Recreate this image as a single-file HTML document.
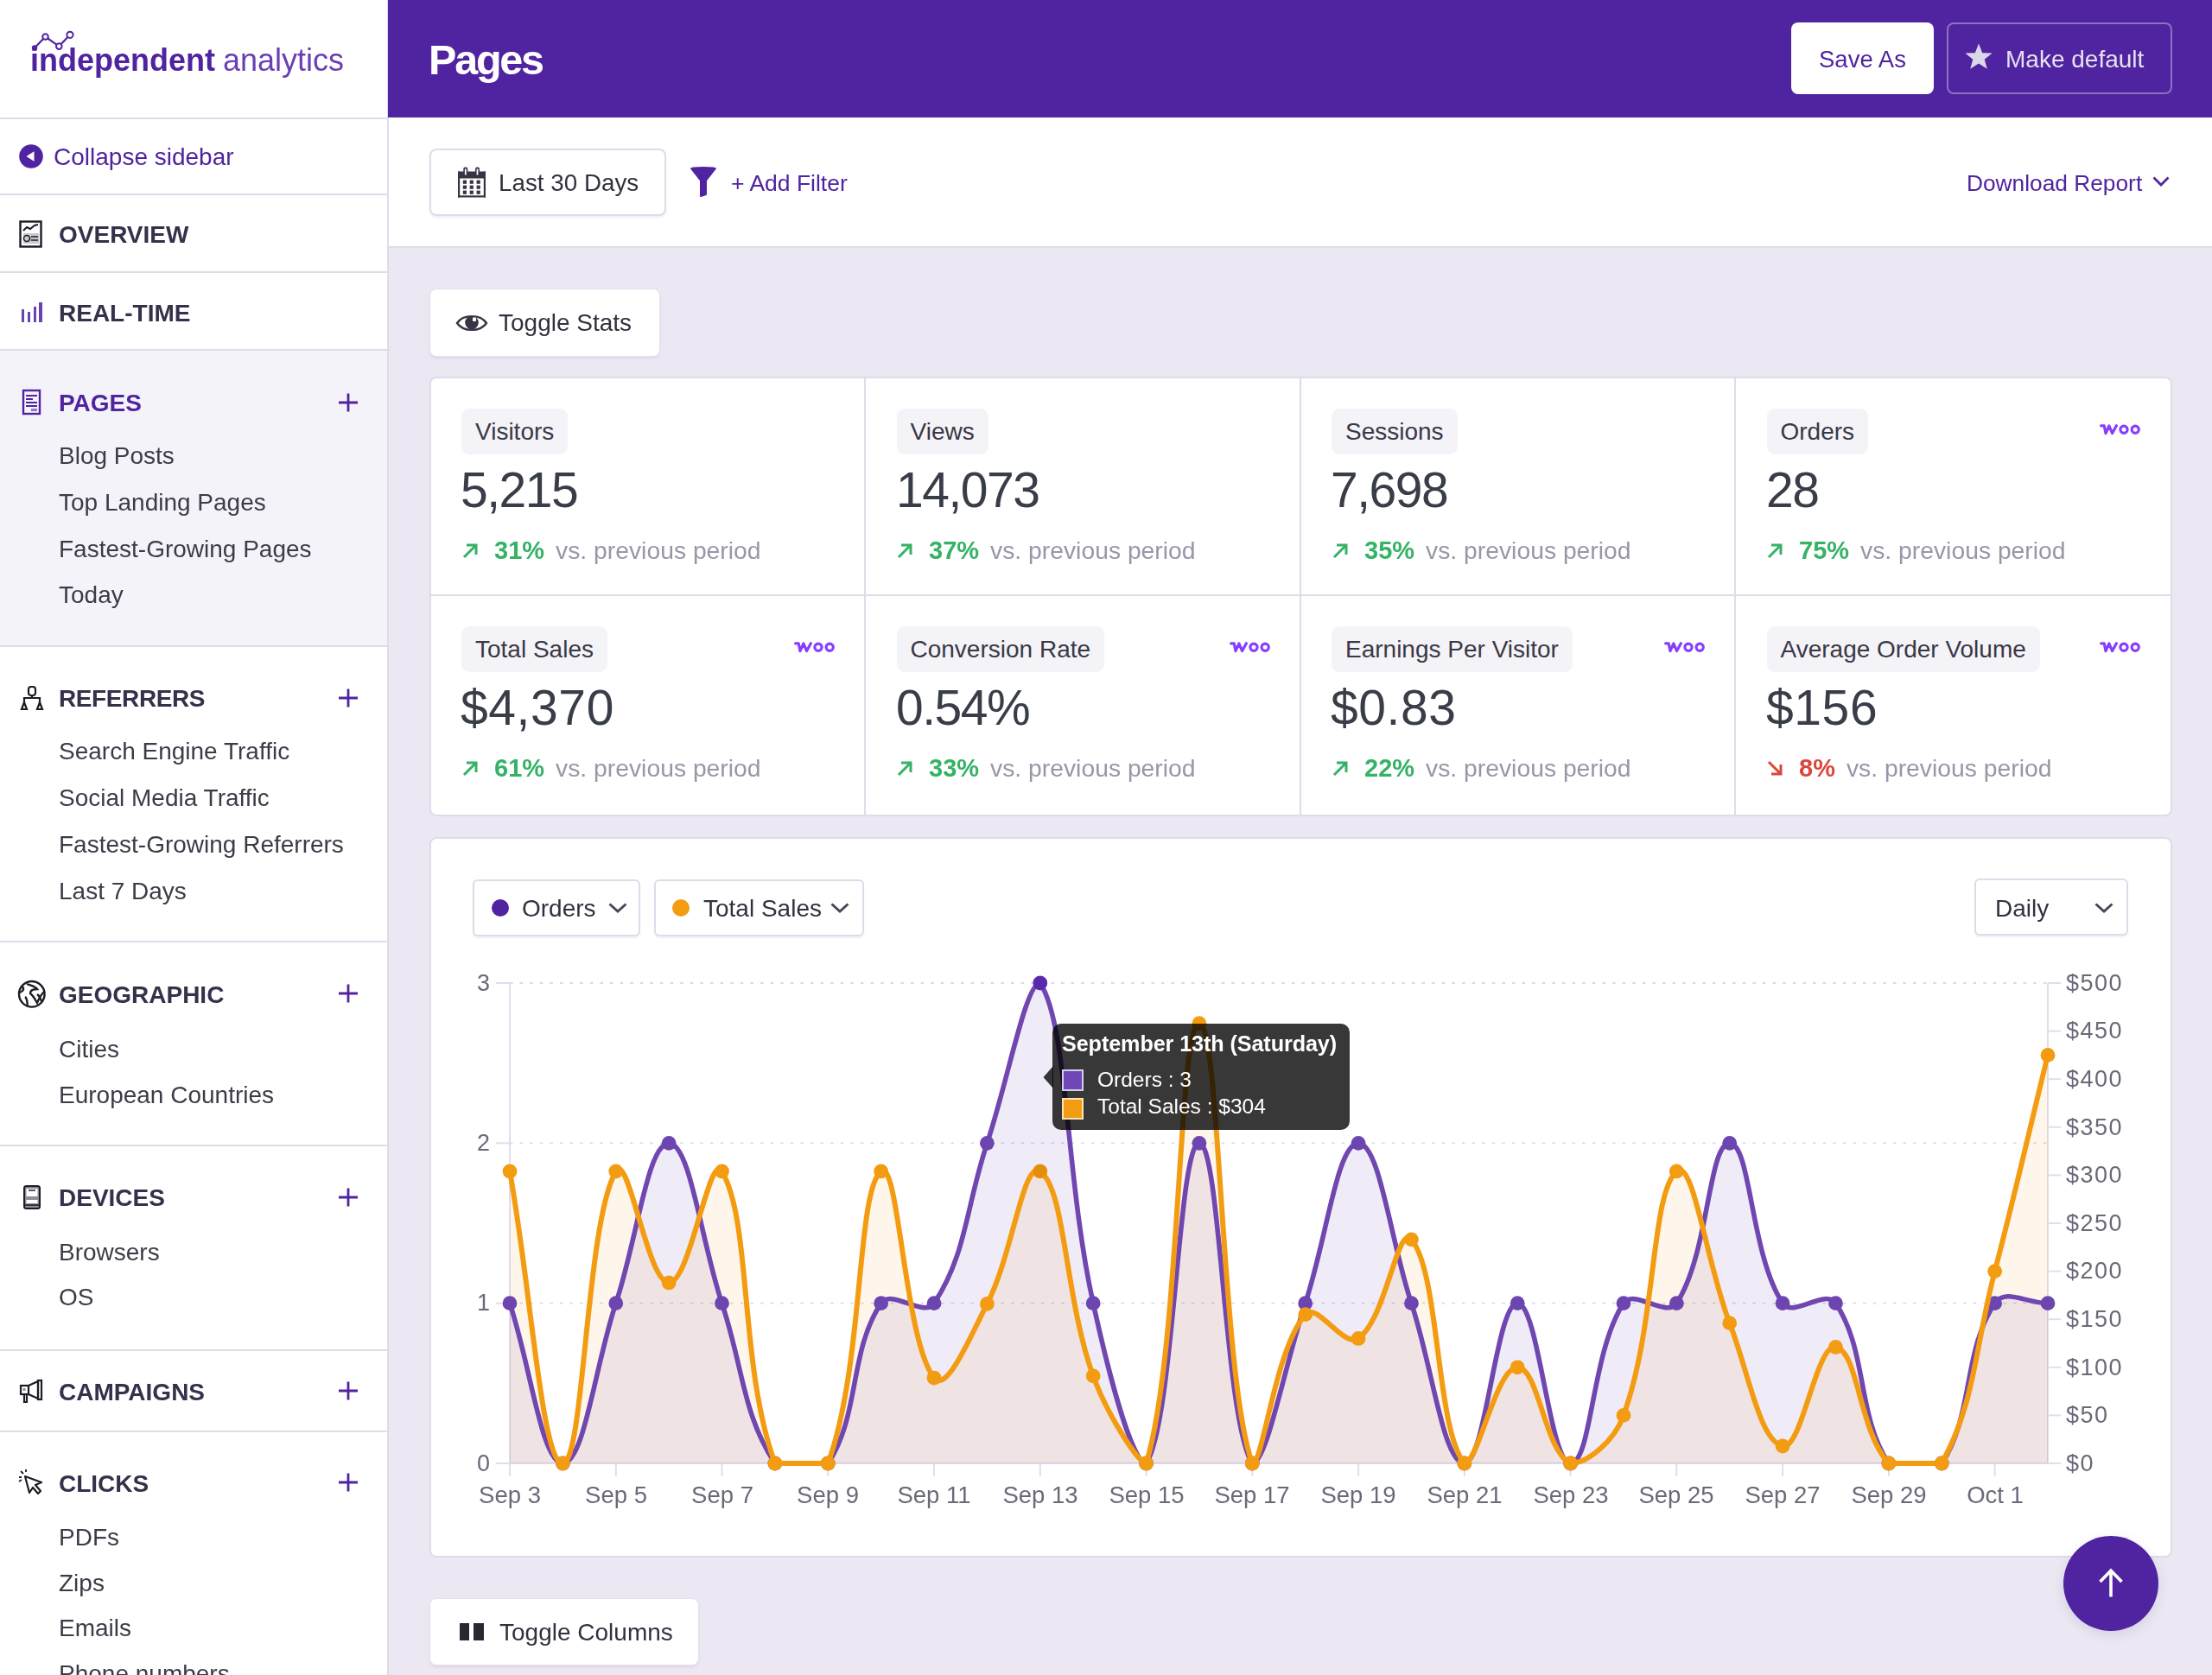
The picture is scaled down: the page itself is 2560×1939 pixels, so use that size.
<!DOCTYPE html>
<html><head><meta charset="utf-8"><title>Pages</title>
<style>
html,body{margin:0;padding:0;}
body{width:2560px;height:1939px;overflow:hidden;position:relative;background:#ebe8f3;font-family:"Liberation Sans",sans-serif;}
.t{position:absolute;white-space:nowrap;line-height:1;will-change:transform;}
.b{position:absolute;}
.pill{position:absolute;height:53px;line-height:53px;padding:0 16px;background:#f4f3f8;border-radius:9px;font-size:28px;color:#3a3845;white-space:nowrap;}
.vs{color:#9a96a8;}
.ax{color:#6b6878;}
</style></head><body>
<div class="b" style="left:0px;top:0px;width:448px;height:1939px;background:#fff"></div><div class="b" style="left:448px;top:0px;width:2px;height:1939px;background:#dfdbe9"></div><svg class="b" style="left:30px;top:30px" width="60" height="40" viewBox="0 0 60 40"><g stroke="#5024a0" stroke-width="2.2" fill="none"><polyline points="10,25.5 22.5,12.5 38.3,23.6 51,10.3"/></g><circle cx="10" cy="25.5" r="3.2" fill="#5024a0"/><circle cx="22.5" cy="12.5" r="3.3" fill="#fff" stroke="#5024a0" stroke-width="2"/><circle cx="38.3" cy="23.6" r="3.3" fill="#fff" stroke="#5024a0" stroke-width="2"/><circle cx="51" cy="10.3" r="3.6" fill="#fff" stroke="#5024a0" stroke-width="2"/></svg><div class="t" style="left:35.0px;top:52.0px;font-size:36px;font-weight:700;color:#5024a0;letter-spacing:0px;">independent</div><div class="t" style="left:258.0px;top:52.0px;font-size:36px;font-weight:400;color:#6a3fb5;letter-spacing:0px;">analytics</div><div class="b" style="left:0px;top:136px;width:448px;height:2px;background:#dfdbe9"></div><svg class="b" style="left:22px;top:167px" width="28" height="28" viewBox="0 0 28 28"><circle cx="14" cy="14" r="13.8" fill="#5024a0"/><path d="M8.5 14 L17.5 8.2 L17.5 19.8 Z" fill="#fff"/></svg><div class="t" style="left:62.0px;top:168.0px;font-size:28px;font-weight:400;color:#5024a0;letter-spacing:0px;">Collapse sidebar</div><div class="b" style="left:0px;top:224px;width:448px;height:2px;background:#dfdbe9"></div><svg class="b" style="left:22px;top:255px" width="28" height="33" viewBox="0 0 28 33"><rect x="1.5" y="1.5" width="24" height="29" fill="none" stroke="#1e1b26" stroke-width="2.4"/><polyline points="5,12 9,8 13,10 18,6 22,5" fill="none" stroke="#1e1b26" stroke-width="2"/><rect x="5" y="15" width="18" height="12" fill="#c9c7cf"/><circle cx="9" cy="21" r="3.5" fill="none" stroke="#1e1b26" stroke-width="1.6"/><path d="M14 19 H22 M14 23 H22" stroke="#1e1b26" stroke-width="1.4"/></svg><div class="t" style="left:68.0px;top:258.0px;font-size:28px;font-weight:700;color:#35314a;letter-spacing:0px;">OVERVIEW</div><div class="b" style="left:0px;top:314px;width:448px;height:2px;background:#dfdbe9"></div><svg class="b" style="left:24px;top:349px" width="26" height="25" viewBox="0 0 26 25"><g fill="#5024a0" opacity="0.85"><rect x="1" y="9" width="3" height="15"/><rect x="8" y="12" width="3" height="12"/><rect x="15" y="6" width="3" height="18"/><rect x="21" y="1" width="4" height="23"/></g></svg><div class="t" style="left:68.0px;top:349.0px;font-size:28px;font-weight:700;color:#35314a;letter-spacing:0px;">REAL-TIME</div><div class="b" style="left:0px;top:404px;width:448px;height:2px;background:#dfdbe9"></div><div class="b" style="left:0px;top:406px;width:448px;height:341px;background:#f5f3fa"></div><svg class="b" style="left:25px;top:450px" width="24" height="31" viewBox="0 0 24 31"><rect x="2" y="2" width="19" height="27" fill="none" stroke="#5024a0" stroke-width="2.4"/><path d="M5 8 H18 M5 12 H13 M5 16 H18 M5 20 H18" stroke="#5024a0" stroke-width="1.8"/><rect x="11" y="23" width="7" height="3" fill="#5024a0" opacity="0.6"/></svg><div class="t" style="left:68.0px;top:453.0px;font-size:28px;font-weight:700;color:#5024a0;letter-spacing:0px;">PAGES</div><svg class="b" style="left:390px;top:454px" width="26" height="24" viewBox="0 0 26 24"><path d="M13 1.5 V22.5 M2 12 H24" stroke="#5024a0" stroke-width="2.8"/></svg><div class="t" style="left:68.0px;top:514.0px;font-size:28px;font-weight:400;color:#3d3b48;letter-spacing:0px;">Blog Posts</div><div class="t" style="left:68.0px;top:568.0px;font-size:28px;font-weight:400;color:#3d3b48;letter-spacing:0px;">Top Landing Pages</div><div class="t" style="left:68.0px;top:622.0px;font-size:28px;font-weight:400;color:#3d3b48;letter-spacing:0px;">Fastest-Growing Pages</div><div class="t" style="left:68.0px;top:675.0px;font-size:28px;font-weight:400;color:#3d3b48;letter-spacing:0px;">Today</div><div class="b" style="left:0px;top:747px;width:448px;height:2px;background:#dfdbe9"></div><svg class="b" style="left:21px;top:792px" width="32" height="32" viewBox="0 0 32 32"><g fill="none" stroke="#1e1b26" stroke-width="2.2"><rect x="12" y="3" width="8" height="10" rx="3"/><path d="M16 13 V16 M7 21 V16 H25 V21"/><path d="M4 29 L7 21 L10 29 Z M22 29 L25 21 L28 29 Z"/></g></svg><div class="t" style="left:68.0px;top:795.0px;font-size:28px;font-weight:700;color:#35314a;letter-spacing:-0.4px;">REFERRERS</div><svg class="b" style="left:390px;top:796px" width="26" height="24" viewBox="0 0 26 24"><path d="M13 1.5 V22.5 M2 12 H24" stroke="#5024a0" stroke-width="2.8"/></svg><div class="t" style="left:68.0px;top:856.0px;font-size:28px;font-weight:400;color:#3d3b48;letter-spacing:0px;">Search Engine Traffic</div><div class="t" style="left:68.0px;top:910.0px;font-size:28px;font-weight:400;color:#3d3b48;letter-spacing:0px;">Social Media Traffic</div><div class="t" style="left:68.0px;top:964.0px;font-size:28px;font-weight:400;color:#3d3b48;letter-spacing:0px;">Fastest-Growing Referrers</div><div class="t" style="left:68.0px;top:1018.0px;font-size:28px;font-weight:400;color:#3d3b48;letter-spacing:0px;">Last 7 Days</div><div class="b" style="left:0px;top:1089px;width:448px;height:2px;background:#dfdbe9"></div><svg class="b" style="left:20px;top:1134px" width="34" height="34" viewBox="0 0 34 34"><g fill="none" stroke="#1e1b26" stroke-width="2.4"><circle cx="16.8" cy="16.8" r="14.8"/><path d="M6 8 C9 12 5 14 3 15 M9 20 C12 22 11 27 12 30 M11 5 C16 7 20 7 23 11 C19 11 15 12 15 16 C19 19 21 24 23 27 C25 22 27 18 31 14 M23 17 C26 19 27 22 28 25"/></g></svg><div class="t" style="left:68.0px;top:1138.0px;font-size:28px;font-weight:700;color:#35314a;letter-spacing:0px;">GEOGRAPHIC</div><svg class="b" style="left:390px;top:1138px" width="26" height="24" viewBox="0 0 26 24"><path d="M13 1.5 V22.5 M2 12 H24" stroke="#5024a0" stroke-width="2.8"/></svg><div class="t" style="left:68.0px;top:1201.0px;font-size:28px;font-weight:400;color:#3d3b48;letter-spacing:0px;">Cities</div><div class="t" style="left:68.0px;top:1254.0px;font-size:28px;font-weight:400;color:#3d3b48;letter-spacing:0px;">European Countries</div><div class="b" style="left:0px;top:1325px;width:448px;height:2px;background:#dfdbe9"></div><svg class="b" style="left:26px;top:1371px" width="22" height="30" viewBox="0 0 22 30"><rect x="2" y="2" width="18" height="26" rx="2.5" fill="#8e8b94" stroke="#1e1b26" stroke-width="2"/><rect x="4.5" y="5" width="13" height="9" fill="#fff"/><rect x="4.5" y="18" width="13" height="4" fill="#fff"/><path d="M7 7 H15 M3 24 H19" stroke="#1e1b26" stroke-width="1.6"/></svg><div class="t" style="left:68.0px;top:1373.0px;font-size:28px;font-weight:700;color:#35314a;letter-spacing:0px;">DEVICES</div><svg class="b" style="left:390px;top:1374px" width="26" height="24" viewBox="0 0 26 24"><path d="M13 1.5 V22.5 M2 12 H24" stroke="#5024a0" stroke-width="2.8"/></svg><div class="t" style="left:68.0px;top:1436.0px;font-size:28px;font-weight:400;color:#3d3b48;letter-spacing:0px;">Browsers</div><div class="t" style="left:68.0px;top:1488.0px;font-size:28px;font-weight:400;color:#3d3b48;letter-spacing:0px;">OS</div><div class="b" style="left:0px;top:1562px;width:448px;height:2px;background:#dfdbe9"></div><svg class="b" style="left:21px;top:1595px" width="32" height="32" viewBox="0 0 32 32"><g fill="none" stroke="#1e1b26" stroke-width="2.2"><rect x="3" y="9" width="9" height="10"/><path d="M12 9 L23 4 V24 L12 19"/><rect x="23" y="3" width="4" height="22"/><path d="M7 19 V28 H10 V19"/></g><rect x="5.5" y="12" width="3" height="3" fill="#8e8b94"/></svg><div class="t" style="left:68.0px;top:1598.0px;font-size:28px;font-weight:700;color:#35314a;letter-spacing:0px;">CAMPAIGNS</div><svg class="b" style="left:390px;top:1598px" width="26" height="24" viewBox="0 0 26 24"><path d="M13 1.5 V22.5 M2 12 H24" stroke="#5024a0" stroke-width="2.8"/></svg><div class="b" style="left:0px;top:1656px;width:448px;height:2px;background:#dfdbe9"></div><svg class="b" style="left:20px;top:1700px" width="34" height="34" viewBox="0 0 34 34"><g fill="none" stroke="#1e1b26" stroke-width="2.2"><path d="M9 9 L28 16 L21 19 L27 26 L24 29 L18 22 L14 28 Z" stroke-linejoin="round"/><path d="M4 3 L7 6 M10 1 V4 M2 10 H5 M2 15 L5 13" stroke-width="1.8"/></g></svg><div class="t" style="left:68.0px;top:1704.0px;font-size:28px;font-weight:700;color:#35314a;letter-spacing:0px;">CLICKS</div><svg class="b" style="left:390px;top:1704px" width="26" height="24" viewBox="0 0 26 24"><path d="M13 1.5 V22.5 M2 12 H24" stroke="#5024a0" stroke-width="2.8"/></svg><div class="t" style="left:68.0px;top:1766.0px;font-size:28px;font-weight:400;color:#3d3b48;letter-spacing:0px;">PDFs</div><div class="t" style="left:68.0px;top:1819.0px;font-size:28px;font-weight:400;color:#3d3b48;letter-spacing:0px;">Zips</div><div class="t" style="left:68.0px;top:1871.0px;font-size:28px;font-weight:400;color:#3d3b48;letter-spacing:0px;">Emails</div><div class="t" style="left:68.0px;top:1924.0px;font-size:28px;font-weight:400;color:#3d3b48;letter-spacing:0px;">Phone numbers</div><div class="b" style="left:450px;top:0px;width:2110px;height:136px;background:#5024a0"></div><div class="b" style="left:449px;top:0px;width:1px;height:136px;background:#5024a0"></div><div class="t" style="left:496.0px;top:45.0px;font-size:48.5px;font-weight:700;color:#fff;letter-spacing:-2.2px;">Pages</div><div class="b" style="left:2073px;top:26px;width:165px;height:83px;background:#fff;border-radius:8px"></div><div class="t" style="left:2105.0px;top:55.0px;font-size:27.5px;font-weight:400;color:#5024a0;letter-spacing:0px;">Save As</div><div class="b" style="left:2253px;top:26px;width:261px;height:83px;border:2px solid rgba(255,255,255,0.35);border-radius:8px;box-sizing:border-box"></div><svg class="b" style="left:2272px;top:49px" width="36" height="34" viewBox="0 0 36 34"><path d="M18 1.5 L22.2 12.2 L33.6 12.6 L24.7 19.8 L27.8 30.8 L18 24.5 L8.2 30.8 L11.3 19.8 L2.4 12.6 L13.8 12.2 Z" fill="#dcd7e8"/></svg><div class="t" style="left:2321.0px;top:55.0px;font-size:28px;font-weight:400;color:#e6e1f0;letter-spacing:0px;">Make default</div><div class="b" style="left:450px;top:136px;width:2110px;height:149px;background:#fff"></div><div class="b" style="left:450px;top:285px;width:2110px;height:2px;background:#dfdbe9"></div><div class="b" style="left:497px;top:172px;width:274px;height:78px;background:#fff;border:2px solid #dfdbe9;border-radius:8px;box-sizing:border-box;box-shadow:0 2px 3px rgba(60,40,100,0.08)"></div><svg class="b" style="left:529px;top:192px" width="34" height="38" viewBox="0 0 34 38"><g fill="#3a3344"><rect x="1" y="6.5" width="32" height="8"/><rect x="1" y="6.5" width="2.2" height="30"/><rect x="30.8" y="6.5" width="2.2" height="30"/><rect x="1" y="34.3" width="32" height="2.2"/><rect x="6.8" y="16.6" width="4.2" height="4.2"/><rect x="14.7" y="16.6" width="4.2" height="4.2"/><rect x="22.6" y="16.6" width="4.2" height="4.2"/><rect x="6.8" y="22.6" width="4.2" height="4.2"/><rect x="14.7" y="22.6" width="4.2" height="4.2"/><rect x="22.6" y="22.6" width="4.2" height="4.2"/><rect x="6.8" y="28.6" width="4.2" height="4.2"/><rect x="14.7" y="28.6" width="4.2" height="4.2"/><rect x="22.6" y="28.6" width="4.2" height="4.2"/><rect x="7.3" y="1.5" width="5" height="10" rx="2"/><rect x="21" y="1.5" width="5" height="10" rx="2"/></g><rect x="8.9" y="3.5" width="1.8" height="7" fill="#fff"/><rect x="22.6" y="3.5" width="1.8" height="7" fill="#fff"/></svg><div class="t" style="left:577.0px;top:198.0px;font-size:27.8px;font-weight:400;color:#34313f;letter-spacing:0px;">Last 30 Days</div><svg class="b" style="left:798px;top:192px" width="32" height="37" viewBox="0 0 32 37"><path d="M2 3 C2 1.5 30 1.5 30 3 L19 17 V33 L13 35 V17 Z" fill="#5024a0" stroke="#5024a0" stroke-width="2" stroke-linejoin="round"/></svg><div class="t" style="left:846.0px;top:199.0px;font-size:26.5px;font-weight:400;color:#5024a0;letter-spacing:0px;">+ Add Filter</div><div class="t" style="left:2276.0px;top:199.0px;font-size:26.3px;font-weight:400;color:#5024a0;letter-spacing:0px;">Download Report</div><svg class="b" style="left:2490px;top:203px" width="22" height="14" viewBox="0 0 22 14"><path d="M2.5 2.5 L11 11 L19.5 2.5" fill="none" stroke="#5024a0" stroke-width="2.8"/></svg><div class="b" style="left:497px;top:334px;width:267px;height:79px;background:#fff;border:1px solid #e4e0ee;border-radius:8px;box-sizing:border-box;box-shadow:0 2px 3px rgba(60,40,100,0.08)"></div><svg class="b" style="left:527px;top:361px" width="38" height="26" viewBox="0 0 38 26"><path d="M2 13 C9 2.5 29 2.5 36 13 C29 23.5 9 23.5 2 13 Z" fill="none" stroke="#3a3344" stroke-width="2.4"/><circle cx="19" cy="12.6" r="7.8" fill="#3a3344"/><rect x="20" y="6.5" width="4" height="4.5" rx="1" fill="#fff"/></svg><div class="t" style="left:577.0px;top:360.0px;font-size:28px;font-weight:400;color:#34313f;letter-spacing:0px;">Toggle Stats</div><div class="b" style="left:497px;top:436px;width:2017px;height:509px;background:#fff;border:2px solid #dfdbe9;border-radius:8px;box-sizing:border-box"></div><div class="b" style="left:1000px;top:438px;width:2px;height:505px;background:#dfdbe9"></div><div class="b" style="left:1504px;top:438px;width:2px;height:505px;background:#dfdbe9"></div><div class="b" style="left:2007px;top:438px;width:2px;height:505px;background:#dfdbe9"></div><div class="b" style="left:499px;top:688px;width:2013px;height:2px;background:#dfdbe9"></div><div class="pill" style="left:534.0px;top:473px">Visitors</div><div class="t" style="left:533.0px;top:539.0px;font-size:57px;font-weight:400;color:#383d48;letter-spacing:-1.5px;">5,215</div><svg class="b" style="left:534px;top:627px" width="21" height="21" viewBox="0 0 21 21"><path d="M3 18 L17 4 M6 4 H17 V15" fill="none" stroke="#35b266" stroke-width="3"/></svg><div class="t" style="left:571.5px;top:623.0px;font-size:29px;font-weight:700;color:#35b266;letter-spacing:0px;">31%</div><div class="t vs" style="left:571.5px;top:623.0px;font-size:28.3px"><span style="visibility:hidden;font-weight:700;font-size:29px;margin-right:13px">31%</span>vs. previous period</div><div class="pill" style="left:1037.5px;top:473px">Views</div><div class="t" style="left:1036.5px;top:539.0px;font-size:57px;font-weight:400;color:#383d48;letter-spacing:-1.5px;">14,073</div><svg class="b" style="left:1037px;top:627px" width="21" height="21" viewBox="0 0 21 21"><path d="M3 18 L17 4 M6 4 H17 V15" fill="none" stroke="#35b266" stroke-width="3"/></svg><div class="t" style="left:1075.0px;top:623.0px;font-size:29px;font-weight:700;color:#35b266;letter-spacing:0px;">37%</div><div class="t vs" style="left:1075.0px;top:623.0px;font-size:28.3px"><span style="visibility:hidden;font-weight:700;font-size:29px;margin-right:13px">37%</span>vs. previous period</div><div class="pill" style="left:1541.0px;top:473px">Sessions</div><div class="t" style="left:1540.0px;top:539.0px;font-size:57px;font-weight:400;color:#383d48;letter-spacing:-1.5px;">7,698</div><svg class="b" style="left:1541px;top:627px" width="21" height="21" viewBox="0 0 21 21"><path d="M3 18 L17 4 M6 4 H17 V15" fill="none" stroke="#35b266" stroke-width="3"/></svg><div class="t" style="left:1578.5px;top:623.0px;font-size:29px;font-weight:700;color:#35b266;letter-spacing:0px;">35%</div><div class="t vs" style="left:1578.5px;top:623.0px;font-size:28.3px"><span style="visibility:hidden;font-weight:700;font-size:29px;margin-right:13px">35%</span>vs. previous period</div><div class="pill" style="left:2044.5px;top:473px">Orders</div><div class="t" style="left:2043.5px;top:539.0px;font-size:57px;font-weight:400;color:#383d48;letter-spacing:-1.5px;">28</div><svg class="b" style="left:2044px;top:627px" width="21" height="21" viewBox="0 0 21 21"><path d="M3 18 L17 4 M6 4 H17 V15" fill="none" stroke="#35b266" stroke-width="3"/></svg><div class="t" style="left:2082.0px;top:623.0px;font-size:29px;font-weight:700;color:#35b266;letter-spacing:0px;">75%</div><div class="t vs" style="left:2082.0px;top:623.0px;font-size:28.3px"><span style="visibility:hidden;font-weight:700;font-size:29px;margin-right:13px">75%</span>vs. previous period</div><svg class="b" style="left:2430px;top:491px" width="50" height="14" viewBox="0 0 50 14"><g fill="none" stroke="#873eff" stroke-width="3.2" stroke-linejoin="round" stroke-linecap="round"><path d="M1.6 1.8 H5.2 L7 10.6 L10.9 2 L14.6 10.6 L19.4 1.8"/><circle cx="28" cy="6.2" r="4.1"/><circle cx="41.2" cy="6.2" r="4.1"/></g></svg><div class="pill" style="left:534.0px;top:725px">Total Sales</div><div class="t" style="left:533.0px;top:791.0px;font-size:57px;font-weight:400;color:#383d48;letter-spacing:0.6px;">$4,370</div><svg class="b" style="left:534px;top:879px" width="21" height="21" viewBox="0 0 21 21"><path d="M3 18 L17 4 M6 4 H17 V15" fill="none" stroke="#35b266" stroke-width="3"/></svg><div class="t" style="left:571.5px;top:875.0px;font-size:29px;font-weight:700;color:#35b266;letter-spacing:0px;">61%</div><div class="t vs" style="left:571.5px;top:875.0px;font-size:28.3px"><span style="visibility:hidden;font-weight:700;font-size:29px;margin-right:13px">61%</span>vs. previous period</div><svg class="b" style="left:919px;top:743px" width="50" height="14" viewBox="0 0 50 14"><g fill="none" stroke="#873eff" stroke-width="3.2" stroke-linejoin="round" stroke-linecap="round"><path d="M1.6 1.8 H5.2 L7 10.6 L10.9 2 L14.6 10.6 L19.4 1.8"/><circle cx="28" cy="6.2" r="4.1"/><circle cx="41.2" cy="6.2" r="4.1"/></g></svg><div class="pill" style="left:1037.5px;top:725px">Conversion Rate</div><div class="t" style="left:1036.5px;top:791.0px;font-size:57px;font-weight:400;color:#383d48;letter-spacing:-1.5px;">0.54%</div><svg class="b" style="left:1037px;top:879px" width="21" height="21" viewBox="0 0 21 21"><path d="M3 18 L17 4 M6 4 H17 V15" fill="none" stroke="#35b266" stroke-width="3"/></svg><div class="t" style="left:1075.0px;top:875.0px;font-size:29px;font-weight:700;color:#35b266;letter-spacing:0px;">33%</div><div class="t vs" style="left:1075.0px;top:875.0px;font-size:28.3px"><span style="visibility:hidden;font-weight:700;font-size:29px;margin-right:13px">33%</span>vs. previous period</div><svg class="b" style="left:1423px;top:743px" width="50" height="14" viewBox="0 0 50 14"><g fill="none" stroke="#873eff" stroke-width="3.2" stroke-linejoin="round" stroke-linecap="round"><path d="M1.6 1.8 H5.2 L7 10.6 L10.9 2 L14.6 10.6 L19.4 1.8"/><circle cx="28" cy="6.2" r="4.1"/><circle cx="41.2" cy="6.2" r="4.1"/></g></svg><div class="pill" style="left:1541.0px;top:725px">Earnings Per Visitor</div><div class="t" style="left:1540.0px;top:791.0px;font-size:57px;font-weight:400;color:#383d48;letter-spacing:0.6px;">$0.83</div><svg class="b" style="left:1541px;top:879px" width="21" height="21" viewBox="0 0 21 21"><path d="M3 18 L17 4 M6 4 H17 V15" fill="none" stroke="#35b266" stroke-width="3"/></svg><div class="t" style="left:1578.5px;top:875.0px;font-size:29px;font-weight:700;color:#35b266;letter-spacing:0px;">22%</div><div class="t vs" style="left:1578.5px;top:875.0px;font-size:28.3px"><span style="visibility:hidden;font-weight:700;font-size:29px;margin-right:13px">22%</span>vs. previous period</div><svg class="b" style="left:1926px;top:743px" width="50" height="14" viewBox="0 0 50 14"><g fill="none" stroke="#873eff" stroke-width="3.2" stroke-linejoin="round" stroke-linecap="round"><path d="M1.6 1.8 H5.2 L7 10.6 L10.9 2 L14.6 10.6 L19.4 1.8"/><circle cx="28" cy="6.2" r="4.1"/><circle cx="41.2" cy="6.2" r="4.1"/></g></svg><div class="pill" style="left:2044.5px;top:725px">Average Order Volume</div><div class="t" style="left:2043.5px;top:791.0px;font-size:57px;font-weight:400;color:#383d48;letter-spacing:0.6px;">$156</div><svg class="b" style="left:2044px;top:879px" width="21" height="21" viewBox="0 0 21 21"><path d="M3 3 L17 17 M6 17 H17 V6" fill="none" stroke="#d9483b" stroke-width="3"/></svg><div class="t" style="left:2082.0px;top:875.0px;font-size:29px;font-weight:700;color:#d9483b;letter-spacing:0px;">8%</div><div class="t vs" style="left:2082.0px;top:875.0px;font-size:28.3px"><span style="visibility:hidden;font-weight:700;font-size:29px;margin-right:13px">8%</span>vs. previous period</div><svg class="b" style="left:2430px;top:743px" width="50" height="14" viewBox="0 0 50 14"><g fill="none" stroke="#873eff" stroke-width="3.2" stroke-linejoin="round" stroke-linecap="round"><path d="M1.6 1.8 H5.2 L7 10.6 L10.9 2 L14.6 10.6 L19.4 1.8"/><circle cx="28" cy="6.2" r="4.1"/><circle cx="41.2" cy="6.2" r="4.1"/></g></svg><div class="b" style="left:497px;top:969px;width:2017px;height:834px;background:#fff;border:2px solid #dfdbe9;border-radius:8px;box-sizing:border-box"></div><div class="b" style="left:547px;top:1018px;width:194px;height:66px;background:#fff;border:2px solid #dfdbe9;border-radius:6px;box-sizing:border-box;box-shadow:0 2px 2px rgba(60,40,100,0.07)"></div><div class="b" style="left:569px;top:1041px;width:20px;height:20px;border-radius:50%;background:#5024a0"></div><div class="t" style="left:604.0px;top:1038.0px;font-size:28px;font-weight:400;color:#34313f;letter-spacing:0px;">Orders</div><svg class="b" style="left:703px;top:1044px" width="24" height="14" viewBox="0 0 24 14"><path d="M2.5 2.5 L12 11 L21.5 2.5" fill="none" stroke="#4a4656" stroke-width="3"/></svg><div class="b" style="left:757px;top:1018px;width:243px;height:66px;background:#fff;border:2px solid #dfdbe9;border-radius:6px;box-sizing:border-box;box-shadow:0 2px 2px rgba(60,40,100,0.07)"></div><div class="b" style="left:778px;top:1041px;width:20px;height:20px;border-radius:50%;background:#f39c12"></div><div class="t" style="left:814.0px;top:1038.0px;font-size:28px;font-weight:400;color:#34313f;letter-spacing:0px;">Total Sales</div><svg class="b" style="left:960px;top:1044px" width="24" height="14" viewBox="0 0 24 14"><path d="M2.5 2.5 L12 11 L21.5 2.5" fill="none" stroke="#4a4656" stroke-width="3"/></svg><div class="b" style="left:2285px;top:1017px;width:178px;height:66px;background:#fff;border:2px solid #dfdbe9;border-radius:6px;box-sizing:border-box;box-shadow:0 2px 2px rgba(60,40,100,0.07)"></div><div class="t" style="left:2309.0px;top:1038.0px;font-size:28px;font-weight:400;color:#34313f;letter-spacing:0px;">Daily</div><svg class="b" style="left:2423px;top:1044px" width="24" height="14" viewBox="0 0 24 14"><path d="M2.5 2.5 L12 11 L21.5 2.5" fill="none" stroke="#4a4656" stroke-width="3"/></svg><svg class="b" style="left:0;top:0" width="2560" height="1939" viewBox="0 0 2560 1939"><line x1="590.0" y1="1508.6666666666667" x2="2370.0" y2="1508.6666666666667" stroke="#dcd7ea" stroke-width="1.8" stroke-dasharray="3.5 8.1"/><line x1="590.0" y1="1323.3333333333333" x2="2370.0" y2="1323.3333333333333" stroke="#dcd7ea" stroke-width="1.8" stroke-dasharray="3.5 8.1"/><line x1="590.0" y1="1138.0" x2="2370.0" y2="1138.0" stroke="#dcd7ea" stroke-width="1.8" stroke-dasharray="3.5 8.1"/><line x1="574" y1="1694.0" x2="590.0" y2="1694.0" stroke="#e1ddec" stroke-width="2"/><line x1="574" y1="1508.6666666666667" x2="590.0" y2="1508.6666666666667" stroke="#e1ddec" stroke-width="2"/><line x1="574" y1="1323.3333333333333" x2="590.0" y2="1323.3333333333333" stroke="#e1ddec" stroke-width="2"/><line x1="574" y1="1138.0" x2="590.0" y2="1138.0" stroke="#e1ddec" stroke-width="2"/><line x1="2370.0" y1="1694.0" x2="2385" y2="1694.0" stroke="#e1ddec" stroke-width="2"/><line x1="2370.0" y1="1638.4" x2="2385" y2="1638.4" stroke="#e1ddec" stroke-width="2"/><line x1="2370.0" y1="1582.8" x2="2385" y2="1582.8" stroke="#e1ddec" stroke-width="2"/><line x1="2370.0" y1="1527.2" x2="2385" y2="1527.2" stroke="#e1ddec" stroke-width="2"/><line x1="2370.0" y1="1471.6" x2="2385" y2="1471.6" stroke="#e1ddec" stroke-width="2"/><line x1="2370.0" y1="1416.0" x2="2385" y2="1416.0" stroke="#e1ddec" stroke-width="2"/><line x1="2370.0" y1="1360.4" x2="2385" y2="1360.4" stroke="#e1ddec" stroke-width="2"/><line x1="2370.0" y1="1304.8" x2="2385" y2="1304.8" stroke="#e1ddec" stroke-width="2"/><line x1="2370.0" y1="1249.2" x2="2385" y2="1249.2" stroke="#e1ddec" stroke-width="2"/><line x1="2370.0" y1="1193.6" x2="2385" y2="1193.6" stroke="#e1ddec" stroke-width="2"/><line x1="2370.0" y1="1138.0" x2="2385" y2="1138.0" stroke="#e1ddec" stroke-width="2"/><line x1="590.0" y1="1137.0" x2="590.0" y2="1709.0" stroke="#e1ddec" stroke-width="2"/><line x1="2370.0" y1="1138.0" x2="2370.0" y2="1694.0" stroke="#e1ddec" stroke-width="2"/><line x1="574" y1="1694.0" x2="2385" y2="1694.0" stroke="#e1ddec" stroke-width="2"/><line x1="590.0" y1="1694.0" x2="590.0" y2="1709.0" stroke="#e1ddec" stroke-width="2"/><line x1="712.8" y1="1694.0" x2="712.8" y2="1709.0" stroke="#e1ddec" stroke-width="2"/><line x1="835.5" y1="1694.0" x2="835.5" y2="1709.0" stroke="#e1ddec" stroke-width="2"/><line x1="958.3" y1="1694.0" x2="958.3" y2="1709.0" stroke="#e1ddec" stroke-width="2"/><line x1="1081.0" y1="1694.0" x2="1081.0" y2="1709.0" stroke="#e1ddec" stroke-width="2"/><line x1="1203.8" y1="1694.0" x2="1203.8" y2="1709.0" stroke="#e1ddec" stroke-width="2"/><line x1="1326.6" y1="1694.0" x2="1326.6" y2="1709.0" stroke="#e1ddec" stroke-width="2"/><line x1="1449.3" y1="1694.0" x2="1449.3" y2="1709.0" stroke="#e1ddec" stroke-width="2"/><line x1="1572.1" y1="1694.0" x2="1572.1" y2="1709.0" stroke="#e1ddec" stroke-width="2"/><line x1="1694.8" y1="1694.0" x2="1694.8" y2="1709.0" stroke="#e1ddec" stroke-width="2"/><line x1="1817.6" y1="1694.0" x2="1817.6" y2="1709.0" stroke="#e1ddec" stroke-width="2"/><line x1="1940.3" y1="1694.0" x2="1940.3" y2="1709.0" stroke="#e1ddec" stroke-width="2"/><line x1="2063.1" y1="1694.0" x2="2063.1" y2="1709.0" stroke="#e1ddec" stroke-width="2"/><line x1="2185.9" y1="1694.0" x2="2185.9" y2="1709.0" stroke="#e1ddec" stroke-width="2"/><line x1="2308.6" y1="1694.0" x2="2308.6" y2="1709.0" stroke="#e1ddec" stroke-width="2"/><path d="M590.00,1355.95 C614.55,1491.17 626.83,1694.00 651.38,1694.00 C675.93,1694.00 678.08,1415.02 712.76,1355.95 C727.18,1331.39 749.59,1484.94 774.14,1484.94 C798.69,1484.94 821.10,1331.39 835.52,1355.95 C870.20,1415.02 855.24,1579.28 896.90,1694.00 C904.34,1694.00 950.83,1694.00 958.28,1694.00 C999.94,1579.28 991.08,1378.99 1019.66,1355.95 C1040.18,1339.40 1046.62,1552.01 1081.03,1595.03 C1095.72,1613.39 1123.30,1546.64 1142.41,1509.41 C1172.40,1451.00 1184.00,1342.50 1203.79,1355.95 C1233.10,1375.86 1232.08,1501.67 1265.17,1592.81 C1281.18,1636.89 1317.35,1694.00 1326.55,1694.00 C1366.45,1561.36 1363.38,1184.70 1387.93,1184.70 C1412.48,1184.70 1413.12,1594.66 1449.31,1694.00 C1462.22,1694.00 1474.80,1563.90 1510.69,1521.64 C1523.91,1506.08 1555.30,1561.29 1572.07,1549.44 C1604.41,1526.59 1617.34,1415.94 1633.45,1434.90 C1666.45,1473.76 1661.58,1653.95 1694.83,1694.00 C1710.69,1694.00 1731.66,1582.80 1756.21,1582.80 C1780.76,1582.80 1787.86,1680.54 1817.59,1694.00 C1836.97,1694.00 1868.03,1668.52 1878.97,1638.40 C1917.13,1533.30 1910.47,1381.93 1940.34,1355.95 C1959.58,1339.23 1974.93,1462.24 2001.72,1531.65 C2024.04,1589.45 2036.39,1667.94 2063.10,1673.98 C2085.50,1679.06 2101.52,1555.70 2124.48,1559.45 C2150.62,1563.71 2151.16,1655.96 2185.86,1694.00 C2200.26,1694.00 2236.92,1694.00 2247.24,1694.00 C2286.03,1623.73 2285.42,1560.91 2308.62,1471.60 C2334.53,1371.87 2345.45,1321.48 2370.00,1221.40 L2370.0,1694.0 L590.0,1694.0 Z" fill="rgba(243,156,18,0.085)"/><path d="M590.00,1508.67 C614.55,1582.80 626.83,1694.00 651.38,1694.00 C675.93,1694.00 688.21,1582.80 712.76,1508.67 C737.31,1434.53 749.59,1323.33 774.14,1323.33 C798.69,1323.33 810.97,1434.53 835.52,1508.67 C860.07,1582.80 859.54,1637.60 896.90,1694.00 C908.64,1694.00 946.53,1694.00 958.28,1694.00 C995.63,1637.60 982.30,1565.07 1019.66,1508.67 C1031.40,1490.93 1069.29,1526.40 1081.03,1508.67 C1118.39,1452.27 1117.86,1397.47 1142.41,1323.33 C1166.97,1249.20 1187.00,1138.00 1203.79,1138.00 C1236.11,1186.78 1232.86,1362.32 1265.17,1508.67 C1281.96,1584.72 1309.76,1694.00 1326.55,1694.00 C1358.86,1645.22 1363.38,1323.33 1387.93,1323.33 C1412.48,1323.33 1417.00,1645.22 1449.31,1694.00 C1466.10,1694.00 1486.14,1582.80 1510.69,1508.67 C1535.24,1434.53 1547.52,1323.33 1572.07,1323.33 C1596.62,1323.33 1608.90,1434.53 1633.45,1508.67 C1658.00,1582.80 1670.28,1694.00 1694.83,1694.00 C1719.38,1694.00 1731.66,1508.67 1756.21,1508.67 C1780.76,1508.67 1793.03,1694.00 1817.59,1694.00 C1842.14,1694.00 1841.61,1565.07 1878.97,1508.67 C1890.71,1490.93 1928.60,1526.40 1940.34,1508.67 C1977.70,1452.27 1977.17,1323.33 2001.72,1323.33 C2026.28,1323.33 2025.75,1452.27 2063.10,1508.67 C2074.85,1526.40 2112.74,1490.93 2124.48,1508.67 C2161.84,1565.07 2148.50,1637.60 2185.86,1694.00 C2197.61,1694.00 2235.50,1694.00 2247.24,1694.00 C2284.60,1637.60 2271.26,1565.07 2308.62,1508.67 C2320.37,1490.93 2345.45,1508.67 2370.00,1508.67 L2370.0,1694.0 L590.0,1694.0 Z" fill="rgba(80,36,160,0.085)"/><path d="M590.00,1508.67 C614.55,1582.80 626.83,1694.00 651.38,1694.00 C675.93,1694.00 688.21,1582.80 712.76,1508.67 C737.31,1434.53 749.59,1323.33 774.14,1323.33 C798.69,1323.33 810.97,1434.53 835.52,1508.67 C860.07,1582.80 859.54,1637.60 896.90,1694.00 C908.64,1694.00 946.53,1694.00 958.28,1694.00 C995.63,1637.60 982.30,1565.07 1019.66,1508.67 C1031.40,1490.93 1069.29,1526.40 1081.03,1508.67 C1118.39,1452.27 1117.86,1397.47 1142.41,1323.33 C1166.97,1249.20 1187.00,1138.00 1203.79,1138.00 C1236.11,1186.78 1232.86,1362.32 1265.17,1508.67 C1281.96,1584.72 1309.76,1694.00 1326.55,1694.00 C1358.86,1645.22 1363.38,1323.33 1387.93,1323.33 C1412.48,1323.33 1417.00,1645.22 1449.31,1694.00 C1466.10,1694.00 1486.14,1582.80 1510.69,1508.67 C1535.24,1434.53 1547.52,1323.33 1572.07,1323.33 C1596.62,1323.33 1608.90,1434.53 1633.45,1508.67 C1658.00,1582.80 1670.28,1694.00 1694.83,1694.00 C1719.38,1694.00 1731.66,1508.67 1756.21,1508.67 C1780.76,1508.67 1793.03,1694.00 1817.59,1694.00 C1842.14,1694.00 1841.61,1565.07 1878.97,1508.67 C1890.71,1490.93 1928.60,1526.40 1940.34,1508.67 C1977.70,1452.27 1977.17,1323.33 2001.72,1323.33 C2026.28,1323.33 2025.75,1452.27 2063.10,1508.67 C2074.85,1526.40 2112.74,1490.93 2124.48,1508.67 C2161.84,1565.07 2148.50,1637.60 2185.86,1694.00 C2197.61,1694.00 2235.50,1694.00 2247.24,1694.00 C2284.60,1637.60 2271.26,1565.07 2308.62,1508.67 C2320.37,1490.93 2345.45,1508.67 2370.00,1508.67" fill="none" stroke="#7047b0" stroke-width="5.6"/><circle cx="590.00" cy="1508.67" r="8.4" fill="#6c45b0"/><circle cx="651.38" cy="1694.00" r="8.4" fill="#6c45b0"/><circle cx="712.76" cy="1508.67" r="8.4" fill="#6c45b0"/><circle cx="774.14" cy="1323.33" r="8.4" fill="#6c45b0"/><circle cx="835.52" cy="1508.67" r="8.4" fill="#6c45b0"/><circle cx="896.90" cy="1694.00" r="8.4" fill="#6c45b0"/><circle cx="958.28" cy="1694.00" r="8.4" fill="#6c45b0"/><circle cx="1019.66" cy="1508.67" r="8.4" fill="#6c45b0"/><circle cx="1081.03" cy="1508.67" r="8.4" fill="#6c45b0"/><circle cx="1142.41" cy="1323.33" r="8.4" fill="#6c45b0"/><circle cx="1203.79" cy="1138.00" r="8.4" fill="#6c45b0"/><circle cx="1265.17" cy="1508.67" r="8.4" fill="#6c45b0"/><circle cx="1326.55" cy="1694.00" r="8.4" fill="#6c45b0"/><circle cx="1387.93" cy="1323.33" r="8.4" fill="#6c45b0"/><circle cx="1449.31" cy="1694.00" r="8.4" fill="#6c45b0"/><circle cx="1510.69" cy="1508.67" r="8.4" fill="#6c45b0"/><circle cx="1572.07" cy="1323.33" r="8.4" fill="#6c45b0"/><circle cx="1633.45" cy="1508.67" r="8.4" fill="#6c45b0"/><circle cx="1694.83" cy="1694.00" r="8.4" fill="#6c45b0"/><circle cx="1756.21" cy="1508.67" r="8.4" fill="#6c45b0"/><circle cx="1817.59" cy="1694.00" r="8.4" fill="#6c45b0"/><circle cx="1878.97" cy="1508.67" r="8.4" fill="#6c45b0"/><circle cx="1940.34" cy="1508.67" r="8.4" fill="#6c45b0"/><circle cx="2001.72" cy="1323.33" r="8.4" fill="#6c45b0"/><circle cx="2063.10" cy="1508.67" r="8.4" fill="#6c45b0"/><circle cx="2124.48" cy="1508.67" r="8.4" fill="#6c45b0"/><circle cx="2185.86" cy="1694.00" r="8.4" fill="#6c45b0"/><circle cx="2247.24" cy="1694.00" r="8.4" fill="#6c45b0"/><circle cx="2308.62" cy="1508.67" r="8.4" fill="#6c45b0"/><circle cx="2370.00" cy="1508.67" r="8.4" fill="#6c45b0"/><path d="M590.00,1355.95 C614.55,1491.17 626.83,1694.00 651.38,1694.00 C675.93,1694.00 678.08,1415.02 712.76,1355.95 C727.18,1331.39 749.59,1484.94 774.14,1484.94 C798.69,1484.94 821.10,1331.39 835.52,1355.95 C870.20,1415.02 855.24,1579.28 896.90,1694.00 C904.34,1694.00 950.83,1694.00 958.28,1694.00 C999.94,1579.28 991.08,1378.99 1019.66,1355.95 C1040.18,1339.40 1046.62,1552.01 1081.03,1595.03 C1095.72,1613.39 1123.30,1546.64 1142.41,1509.41 C1172.40,1451.00 1184.00,1342.50 1203.79,1355.95 C1233.10,1375.86 1232.08,1501.67 1265.17,1592.81 C1281.18,1636.89 1317.35,1694.00 1326.55,1694.00 C1366.45,1561.36 1363.38,1184.70 1387.93,1184.70 C1412.48,1184.70 1413.12,1594.66 1449.31,1694.00 C1462.22,1694.00 1474.80,1563.90 1510.69,1521.64 C1523.91,1506.08 1555.30,1561.29 1572.07,1549.44 C1604.41,1526.59 1617.34,1415.94 1633.45,1434.90 C1666.45,1473.76 1661.58,1653.95 1694.83,1694.00 C1710.69,1694.00 1731.66,1582.80 1756.21,1582.80 C1780.76,1582.80 1787.86,1680.54 1817.59,1694.00 C1836.97,1694.00 1868.03,1668.52 1878.97,1638.40 C1917.13,1533.30 1910.47,1381.93 1940.34,1355.95 C1959.58,1339.23 1974.93,1462.24 2001.72,1531.65 C2024.04,1589.45 2036.39,1667.94 2063.10,1673.98 C2085.50,1679.06 2101.52,1555.70 2124.48,1559.45 C2150.62,1563.71 2151.16,1655.96 2185.86,1694.00 C2200.26,1694.00 2236.92,1694.00 2247.24,1694.00 C2286.03,1623.73 2285.42,1560.91 2308.62,1471.60 C2334.53,1371.87 2345.45,1321.48 2370.00,1221.40" fill="none" stroke="#f39c12" stroke-width="6"/><circle cx="590.00" cy="1355.95" r="8.4" fill="#f39c12"/><circle cx="651.38" cy="1694.00" r="8.4" fill="#f39c12"/><circle cx="712.76" cy="1355.95" r="8.4" fill="#f39c12"/><circle cx="774.14" cy="1484.94" r="8.4" fill="#f39c12"/><circle cx="835.52" cy="1355.95" r="8.4" fill="#f39c12"/><circle cx="896.90" cy="1694.00" r="8.4" fill="#f39c12"/><circle cx="958.28" cy="1694.00" r="8.4" fill="#f39c12"/><circle cx="1019.66" cy="1355.95" r="8.4" fill="#f39c12"/><circle cx="1081.03" cy="1595.03" r="8.4" fill="#f39c12"/><circle cx="1142.41" cy="1509.41" r="8.4" fill="#f39c12"/><circle cx="1203.79" cy="1355.95" r="8.4" fill="#f39c12"/><circle cx="1265.17" cy="1592.81" r="8.4" fill="#f39c12"/><circle cx="1326.55" cy="1694.00" r="8.4" fill="#f39c12"/><circle cx="1387.93" cy="1184.70" r="8.4" fill="#f39c12"/><circle cx="1449.31" cy="1694.00" r="8.4" fill="#f39c12"/><circle cx="1510.69" cy="1521.64" r="8.4" fill="#f39c12"/><circle cx="1572.07" cy="1549.44" r="8.4" fill="#f39c12"/><circle cx="1633.45" cy="1434.90" r="8.4" fill="#f39c12"/><circle cx="1694.83" cy="1694.00" r="8.4" fill="#f39c12"/><circle cx="1756.21" cy="1582.80" r="8.4" fill="#f39c12"/><circle cx="1817.59" cy="1694.00" r="8.4" fill="#f39c12"/><circle cx="1878.97" cy="1638.40" r="8.4" fill="#f39c12"/><circle cx="1940.34" cy="1355.95" r="8.4" fill="#f39c12"/><circle cx="2001.72" cy="1531.65" r="8.4" fill="#f39c12"/><circle cx="2063.10" cy="1673.98" r="8.4" fill="#f39c12"/><circle cx="2124.48" cy="1559.45" r="8.4" fill="#f39c12"/><circle cx="2185.86" cy="1694.00" r="8.4" fill="#f39c12"/><circle cx="2247.24" cy="1694.00" r="8.4" fill="#f39c12"/><circle cx="2308.62" cy="1471.60" r="8.4" fill="#f39c12"/><circle cx="2370.00" cy="1221.40" r="8.4" fill="#f39c12"/><circle cx="1203.79" cy="1138.00" r="8" fill="#5a2aae"/><circle cx="1203.79" cy="1355.95" r="8" fill="#e58e0c"/></svg><div class="t ax" style="left:520px;width:47px;text-align:right;top:1681px;font-size:27px">0</div><div class="t ax" style="left:520px;width:47px;text-align:right;top:1495px;font-size:27px">1</div><div class="t ax" style="left:520px;width:47px;text-align:right;top:1310px;font-size:27px">2</div><div class="t ax" style="left:520px;width:47px;text-align:right;top:1125px;font-size:27px">3</div><div class="t ax" style="left:2391px;top:1681px;font-size:27px;letter-spacing:1.5px">$0</div><div class="t ax" style="left:2391px;top:1625px;font-size:27px;letter-spacing:1.5px">$50</div><div class="t ax" style="left:2391px;top:1570px;font-size:27px;letter-spacing:1.5px">$100</div><div class="t ax" style="left:2391px;top:1514px;font-size:27px;letter-spacing:1.5px">$150</div><div class="t ax" style="left:2391px;top:1458px;font-size:27px;letter-spacing:1.5px">$200</div><div class="t ax" style="left:2391px;top:1403px;font-size:27px;letter-spacing:1.5px">$250</div><div class="t ax" style="left:2391px;top:1347px;font-size:27px;letter-spacing:1.5px">$300</div><div class="t ax" style="left:2391px;top:1292px;font-size:27px;letter-spacing:1.5px">$350</div><div class="t ax" style="left:2391px;top:1236px;font-size:27px;letter-spacing:1.5px">$400</div><div class="t ax" style="left:2391px;top:1180px;font-size:27px;letter-spacing:1.5px">$450</div><div class="t ax" style="left:2391px;top:1125px;font-size:27px;letter-spacing:1.5px">$500</div><div class="t ax" style="left:490.0px;width:200px;text-align:center;top:1717px;font-size:27.5px">Sep 3</div><div class="t ax" style="left:612.8px;width:200px;text-align:center;top:1717px;font-size:27.5px">Sep 5</div><div class="t ax" style="left:735.5px;width:200px;text-align:center;top:1717px;font-size:27.5px">Sep 7</div><div class="t ax" style="left:858.3px;width:200px;text-align:center;top:1717px;font-size:27.5px">Sep 9</div><div class="t ax" style="left:981.0px;width:200px;text-align:center;top:1717px;font-size:27.5px">Sep 11</div><div class="t ax" style="left:1103.8px;width:200px;text-align:center;top:1717px;font-size:27.5px">Sep 13</div><div class="t ax" style="left:1226.6px;width:200px;text-align:center;top:1717px;font-size:27.5px">Sep 15</div><div class="t ax" style="left:1349.3px;width:200px;text-align:center;top:1717px;font-size:27.5px">Sep 17</div><div class="t ax" style="left:1472.1px;width:200px;text-align:center;top:1717px;font-size:27.5px">Sep 19</div><div class="t ax" style="left:1594.8px;width:200px;text-align:center;top:1717px;font-size:27.5px">Sep 21</div><div class="t ax" style="left:1717.6px;width:200px;text-align:center;top:1717px;font-size:27.5px">Sep 23</div><div class="t ax" style="left:1840.3px;width:200px;text-align:center;top:1717px;font-size:27.5px">Sep 25</div><div class="t ax" style="left:1963.1px;width:200px;text-align:center;top:1717px;font-size:27.5px">Sep 27</div><div class="t ax" style="left:2085.9px;width:200px;text-align:center;top:1717px;font-size:27.5px">Sep 29</div><div class="t ax" style="left:2208.6px;width:200px;text-align:center;top:1717px;font-size:27.5px">Oct 1</div><div class="b" style="left:1218px;top:1185px;width:344px;height:123px;background:rgba(0,0,0,0.78);border-radius:10px"></div><svg class="b" style="left:1207px;top:1234px" width="12" height="26" viewBox="0 0 12 26"><path d="M12 0 L0.5 13 L12 26 Z" fill="rgba(0,0,0,0.78)"/></svg><div class="t" style="left:1229.0px;top:1196.0px;font-size:25.2px;font-weight:700;color:#fff;letter-spacing:-0.1px;">September 13th (Saturday)</div><div class="b" style="left:1229px;top:1238px;width:25px;height:25px;background:#7048b8;border:2px solid #d7cdea;box-sizing:border-box"></div><div class="b" style="left:1229px;top:1271px;width:25px;height:25px;background:#f39c12;border:2px solid #fde3b8;box-sizing:border-box"></div><div class="t" style="left:1270.0px;top:1238.0px;font-size:24.5px;font-weight:400;color:#fff;letter-spacing:0px;">Orders : 3</div><div class="t" style="left:1270.0px;top:1269.0px;font-size:24.5px;font-weight:400;color:#fff;letter-spacing:0px;">Total Sales : $304</div><div class="b" style="left:497px;top:1850px;width:312px;height:78px;background:#fff;border:1px solid #e4e0ee;border-radius:8px;box-sizing:border-box;box-shadow:0 2px 3px rgba(60,40,100,0.08)"></div><svg class="b" style="left:531px;top:1878px" width="30" height="22" viewBox="0 0 30 22"><rect x="1" y="1" width="11" height="20" fill="#2a2733"/><rect x="17" y="1" width="12" height="20" fill="#2a2733"/></svg><div class="t" style="left:578.0px;top:1876.0px;font-size:28px;font-weight:400;color:#34313f;letter-spacing:0px;">Toggle Columns</div><div class="b" style="left:2388px;top:1778px;width:110px;height:110px;border-radius:50%;background:#5024a0;box-shadow:0 4px 14px rgba(60,30,120,0.12)"></div><svg class="b" style="left:2428px;top:1814px" width="30" height="36" viewBox="0 0 30 36"><path d="M15 34.5 V4 M2.5 17 L15 4.2 L27.5 17" fill="none" stroke="#fff" stroke-width="3.6"/></svg>
</body></html>
